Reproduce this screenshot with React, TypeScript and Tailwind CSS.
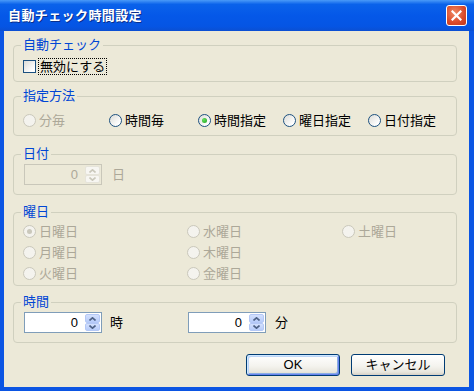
import React from 'react';

function Radio({ checked, disabled }: { checked?: boolean; disabled?: boolean }) {
    return (
        <span
            className={`flex h-[13px] w-[13px] shrink-0 items-center justify-center rounded-full border ${
                disabled
                    ? 'border-[#CAC8BB] bg-[#F4F3EE]'
                    : 'border-[#1C5180] bg-[linear-gradient(135deg,#DCDCD7,#FFFFFF_80%)]'
            }`}
        >
            {checked && (
                <span
                    className={`h-[5px] w-[5px] rounded-full ${
                        disabled ? 'bg-[#CAC8BB]' : 'bg-[radial-gradient(circle_at_35%_35%,#63E15E,#21A121)]'
                    }`}
                />
            )}
        </span>
    );
}

function RadioItem({ label, checked, disabled, className }: { label: string; checked?: boolean; disabled?: boolean; className?: string }) {
    return (
        <div className={`flex items-center ${className ?? ''}`}>
            <Radio checked={checked} disabled={disabled} />
            <span className={`ml-[3px] text-[13px] leading-[15px] ${disabled ? 'text-[#ACA899]' : 'text-black'}`}>{label}</span>
        </div>
    );
}

function Arrow({ up, color }: { up?: boolean; color: string }) {
    return (
        <svg width="7" height="4" viewBox="0 0 7 4">
            <path d={up ? 'M0.5 3.5 L3.5 0.8 L6.5 3.5' : 'M0.5 0.5 L3.5 3.2 L6.5 0.5'} fill="none" stroke={color} strokeWidth="1.6" />
        </svg>
    );
}

function Spin({ disabled }: { disabled?: boolean }) {
    const half = disabled
        ? 'border-[#E6E4DA] bg-[#F7F6F2]'
        : 'border-[#B4C8F6] bg-[linear-gradient(180deg,#D3E0FD,#B7CCFA)]';
    const arrow = disabled ? '#CAC8BB' : '#4D6185';
    return (
        <div
            className={`flex h-[21px] w-[78px] items-center border ${
                disabled ? 'border-[#C9C7BA] bg-[#ECE9D8]' : 'border-[#7F9DB9] bg-white'
            }`}
        >
            <span className={`flex-1 pr-[7px] text-right text-[13px] leading-[15px] ${disabled ? 'text-[#ACA899]' : 'text-black'}`}>0</span>
            <div className="mr-[1px] flex h-[17px] w-[15px] flex-col">
                <div className={`flex h-[9px] items-center justify-center rounded-[2px] border ${half}`}>
                    <Arrow up color={arrow} />
                </div>
                <div className={`flex h-[8px] items-center justify-center rounded-[2px] border ${half}`}>
                    <Arrow color={arrow} />
                </div>
            </div>
        </div>
    );
}

function Group({ title, className, children }: { title: string; className?: string; children: React.ReactNode }) {
    return (
        <fieldset className={`ml-[9px] w-[444px] rounded-[4px] border border-[#D0D0BF] ${className ?? ''}`}>
            <legend className="ml-[7px] px-[2px] text-[13px] leading-[14px] text-[#0046D5]">{title}</legend>
            {children}
        </fieldset>
    );
}

const App: React.FC = () => {
    return (
        <div className="flex h-[391px] w-[474px] flex-col overflow-hidden bg-[#0B55E3] font-['Liberation_Sans','Noto_Sans_CJK_JP',sans-serif]">
            {/* title bar */}
            <div className="flex h-[31px] shrink-0 items-center justify-between bg-[linear-gradient(180deg,#4A9AF8_0%,#0A62EA_14%,#0558E8_50%,#0555E4_85%,#0B4FD2_100%)] pl-[8px] pr-[7px]">
                <span className="pt-[1px] text-[13px] font-bold leading-[16px] tracking-[0.4px] text-white [text-shadow:1px_1px_0_#0A2F8C]">
                    自動チェック時間設定
                </span>
                <div className="flex h-[21px] w-[21px] items-center justify-center rounded-[3px] border border-white bg-[radial-gradient(circle_at_40%_35%,#F08A63,#D9492A_60%,#C0381C)]">
                    <svg width="11" height="11" viewBox="0 0 11 11">
                        <path d="M1.5 1.5 L9.5 9.5 M9.5 1.5 L1.5 9.5" stroke="white" strokeWidth="2.2" strokeLinecap="square" />
                    </svg>
                </div>
            </div>

            {/* body */}
            <div className="mb-[4px] ml-[4px] mr-[5px] flex flex-1 flex-col bg-[#ECE9D8] pt-[7px]">
                <Group title="自動チェック">
                    <div className="flex h-[29px] items-center pl-[9px]">
                        <span className="h-[13px] w-[13px] border border-[#1C5180] bg-[linear-gradient(135deg,#DCDCD7,#FFFFFF_80%)]" />
                        <span className="ml-[2px] border border-dotted border-black px-[1px] text-[13px] leading-[15px] text-black">無効にする</span>
                    </div>
                </Group>

                <Group title="指定方法" className="mt-[7px]">
                    <div className="flex h-[32px] items-center pl-[9px] pt-[2px]">
                        <RadioItem label="分毎" disabled className="w-[86px]" />
                        <RadioItem label="時間毎" className="w-[89px]" />
                        <RadioItem label="時間指定" checked className="w-[85px]" />
                        <RadioItem label="曜日指定" className="w-[85px]" />
                        <RadioItem label="日付指定" />
                    </div>
                </Group>

                <Group title="日付" className="mt-[11px]">
                    <div className="flex h-[33px] items-start pl-[10px] pt-[3px]">
                        <Spin disabled />
                        <span className="ml-[10px] text-[13px] leading-[21px] text-[#ACA899]">日</span>
                    </div>
                </Group>

                <Group title="曜日" className="mt-[10px]">
                    <div className="grid h-[66px] grid-flow-col grid-cols-[164px_155px_1fr] grid-rows-[21px_21px_21px] pl-[9px] pt-[2px]">
                        <RadioItem label="日曜日" checked disabled />
                        <RadioItem label="月曜日" disabled />
                        <RadioItem label="火曜日" disabled />
                        <RadioItem label="水曜日" disabled />
                        <RadioItem label="木曜日" disabled />
                        <RadioItem label="金曜日" disabled />
                        <RadioItem label="土曜日" disabled />
                    </div>
                </Group>

                <Group title="時間" className="mt-[9px]">
                    <div className="flex h-[33px] items-start pl-[10px] pt-[3px]">
                        <div className="flex w-[164px] items-center">
                            <Spin />
                            <span className="ml-[8px] text-[13px] leading-[21px] text-black">時</span>
                        </div>
                        <div className="flex items-center">
                            <Spin />
                            <span className="ml-[9px] text-[13px] leading-[21px] text-black">分</span>
                        </div>
                    </div>
                </Group>

                <div className="mt-[11px] flex justify-end gap-[11px] pr-[24px]">
                    <button className="h-[22px] w-[94px] rounded-[3px] border border-[#003C74] bg-[linear-gradient(180deg,#FFFFFF_0%,#F4F3EE_55%,#E8E6DD_85%,#D6D0C5_100%)] text-[13px] leading-[18px] text-black shadow-[inset_1px_1px_0_#CEE7FF,inset_-1px_-1px_0_#6982EE,inset_2px_2px_0_#BCD4F6,inset_-2px_-2px_0_#89ADE4]">
                        OK
                    </button>
                    <button className="h-[22px] w-[94px] rounded-[3px] border border-[#003C74] bg-[linear-gradient(180deg,#FFFFFF_0%,#F4F3EE_55%,#E8E6DD_85%,#D6D0C5_100%)] text-[13px] leading-[18px] text-black">
                        キャンセル
                    </button>
                </div>
            </div>
        </div>
    );
};

export default App;
